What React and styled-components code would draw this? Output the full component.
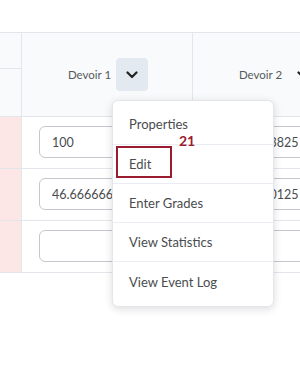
import React from "react"
import styled, { createGlobalStyle } from "styled-components"

const GlobalStyle = createGlobalStyle`
  body {
    margin: 0;
    background: #ffffff;
    font-family: Lato, "Noto Sans", sans-serif;
  }
`

const columns = [
  { title: "Devoir 1", active: true, values: ["100", "46.666666666", ""] },
  { title: "Devoir 2", active: false, values: ["65.47413825", "41.18750125", ""] },
]

const menuItems = ["Properties", "Edit", "Enter Grades", "View Statistics", "View Event Log"]

const Chevron = () => (
  <svg width="12" height="8" viewBox="0 0 12 8">
    <polyline points="1.5,1.5 6,6 10.5,1.5" fill="none" stroke="#202122" strokeWidth="2.2" strokeLinecap="round" strokeLinejoin="round" />
  </svg>
)

const App = () => (
  <Page>
    <GlobalStyle />
    <Table>
      <LeftHead>
        <LeftHeadTop />
      </LeftHead>
      {columns.map((col) => (
        <HeadCell key={col.title}>
          <HeadLabel>{col.title}</HeadLabel>
          <ChevronButton $active={col.active}>
            <Chevron />
          </ChevronButton>
        </HeadCell>
      ))}
      {[0, 1, 2].map((row) => (
        <React.Fragment key={row}>
          <FlagCell />
          {columns.map((col) => (
            <GradeCell key={col.title}>
              <GradeInput readOnly value={col.values[row]} />
            </GradeCell>
          ))}
        </React.Fragment>
      ))}
    </Table>
    <Menu>
      {menuItems.map((item) => (
        <MenuItem key={item}>
          {item}
          {item === "Edit" && (
            <>
              <Highlight />
              <Marker>21</Marker>
            </>
          )}
        </MenuItem>
      ))}
    </Menu>
  </Page>
)

const Page = styled.div`
  position: relative;
  width: 300px;
  height: 373px;
  overflow: hidden;
  padding-top: 32px;
  box-sizing: border-box;
`

const Table = styled.div`
  display: grid;
  grid-template-columns: 22px 171px 171px;
  grid-template-rows: 85px repeat(3, 52px);
  width: 364px;
`

const LeftHead = styled.div`
  background: #f9fafc;
  border-top: 1px solid #e3e6ea;
  border-right: 1px solid #e3e6ea;
  border-bottom: 1px solid #e3e6ea;
`

const LeftHeadTop = styled.div`
  height: 35px;
  border-bottom: 1px solid #e3e6ea;
`

const HeadCell = styled.div`
  display: flex;
  align-items: center;
  justify-content: center;
  gap: 5px;
  padding-left: 2px;
  background: #f9fafc;
  border-top: 1px solid #e3e6ea;
  border-right: 1px solid #e3e6ea;
  border-bottom: 1px solid #e3e6ea;
`

const HeadLabel = styled.span`
  font-size: 11.5px;
  color: #565a5c;
`

const ChevronButton = styled.div`
  width: 32px;
  height: 33px;
  border-radius: 4px;
  display: flex;
  align-items: center;
  justify-content: center;
  background: ${(p) => (p.$active ? "#e3e9f1" : "transparent")};
`

const FlagCell = styled.div`
  background: #fde6e6;
  border-right: 1px solid #e3e6ea;
  border-bottom: 1px solid #e3e6ea;
`

const GradeCell = styled.div`
  display: flex;
  align-items: center;
  padding: 0 0 0 17px;
  border-right: 1px solid #e3e6ea;
  border-bottom: 1px solid #e3e6ea;
  overflow: hidden;
`

const GradeInput = styled.input`
  box-sizing: border-box;
  width: 180px;
  height: 32px;
  margin-top: -1px;
  padding: 0 12px;
  border: 1px solid #c4c8cc;
  border-radius: 6px;
  font-family: Lato, "Noto Sans", sans-serif;
  font-size: 12.5px;
  color: #494c4e;
  background: #ffffff;
  outline: none;
`

const Menu = styled.div`
  position: absolute;
  top: 100px;
  left: 112px;
  width: 160px;
  padding: 3px 0 4px;
  background: #ffffff;
  border: 1px solid #e3e6ea;
  border-radius: 6px;
  box-shadow: 0 2px 8px rgba(0, 0, 0, 0.14);
`

const MenuItem = styled.div`
  position: relative;
  height: 38px;
  display: flex;
  align-items: center;
  padding-left: 16px;
  font-size: 13px;
  color: #494c4e;
  border-bottom: 1px solid #eaedf1;

  &:first-child {
    height: 40px;
  }

  &:last-child {
    border-bottom: none;
    height: 40px;
  }
`

const Highlight = styled.div`
  position: absolute;
  left: 3px;
  top: 1px;
  width: 56px;
  height: 32px;
  box-sizing: border-box;
  border: 2px solid #9b1b30;
`

const Marker = styled.span`
  position: absolute;
  left: 66px;
  top: -13px;
  font-size: 14px;
  font-weight: 700;
  color: #9b1b30;
`

export default App
